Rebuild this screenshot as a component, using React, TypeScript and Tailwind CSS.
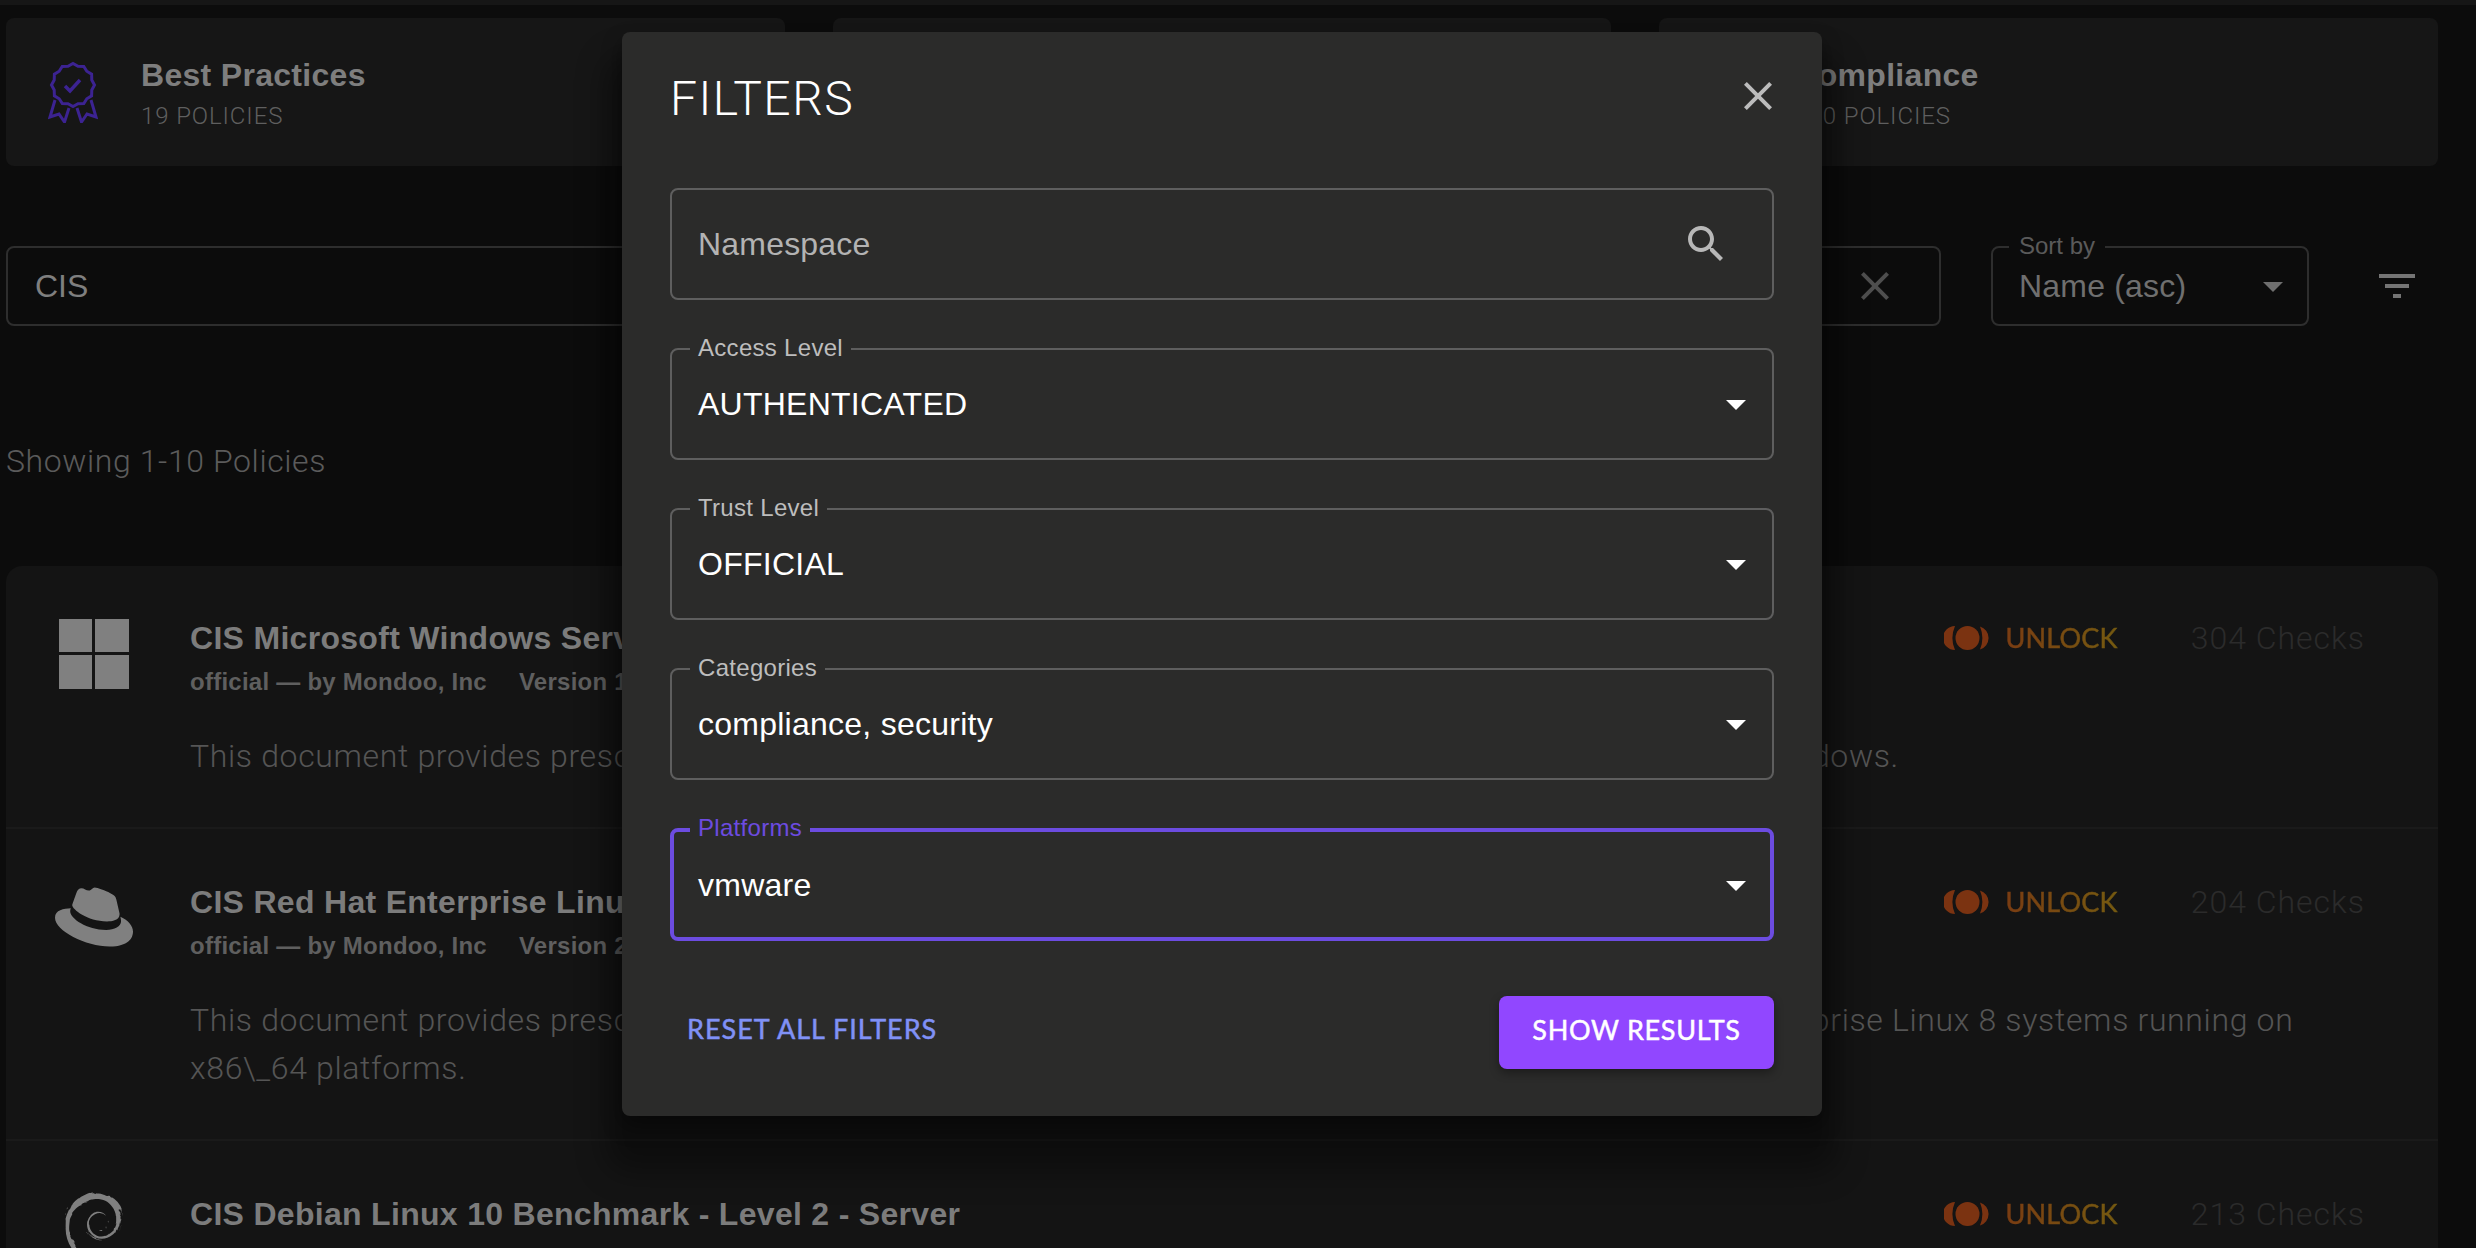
import { SiDebian, SiRedhat } from "react-icons/si";

const sans = "font-['Liberation_Sans',Arial,sans-serif]";
const light = "font-['Roboto','Liberation_Sans',sans-serif] font-light";
const geo = "font-['Lato','Liberation_Sans',sans-serif] font-normal [-webkit-text-stroke:0.5px_currentColor]";

function MuiIcon({ d, className }: { d: string; className: string }) {
  return (
    <svg viewBox="0 0 24 24" className={className} fill="currentColor">
      <path d={d} />
    </svg>
  );
}

const closePath =
  "M19 6.41 17.59 5 12 10.59 6.41 5 5 6.41 10.59 12 5 17.59 6.41 19 12 13.41 17.59 19 19 17.59 13.41 12z";
const searchPath =
  "M15.5 14h-.79l-.28-.27C15.41 12.59 16 11.11 16 9.5 16 5.91 13.09 3 9.5 3S3 5.91 3 9.5 5.91 16 9.5 16c1.61 0 3.09-.59 4.23-1.57l.27.28v.79l5 4.99L20.49 19l-4.99-5zm-6 0C7.01 14 5 11.99 5 9.5S7.01 5 9.5 5 14 7.01 14 9.5 11.99 14 9.5 14z";
const arrowPath = "M7 10l5 5 5-5z";
const filterPath = "M10 18h4v-2h-4v2zM3 6v2h18V6H3zm3 7h12v-2H6v2z";

function scallop(cx: number, cy: number, r: number) {
  const pts: string[] = [];
  for (let i = 0; i < 24; i++) {
    const a = (i / 24) * Math.PI * 2;
    const rr = i % 2 === 0 ? r : r - 2;
    pts.push(`${(cx + Math.cos(a) * rr).toFixed(1)},${(cy + Math.sin(a) * rr).toFixed(1)}`);
  }
  return pts.join(" ");
}

function RibbonIcon() {
  return (
    <svg viewBox="0 0 50 62" className="h-[62px] w-[50px] shrink-0" fill="none" stroke="#3c2392" strokeWidth="3">
      <polygon points={scallop(25, 24, 21.5)} />
      <path d="M7 39 2 56l9-3 5.5 8 4.5-14" />
      <path d="M43 39l5 17-9-3-5.5 8-4.5-14" />
      <path d="M17 25l5 5 10-11" strokeWidth="3.5" />
    </svg>
  );
}

function StatCard({ title, count, icon }: { title: string; count: string; icon?: boolean }) {
  return (
    <div className="flex h-[148px] items-center rounded-[8px] bg-[#161616] pl-[42px]">
      {icon ? <RibbonIcon /> : <div className="h-[62px] w-[50px] shrink-0" />}
      <div className="ml-[43px] pt-[6px]">
        <div className={`${sans} text-[32px] leading-[36px] font-bold tracking-[0.3px] text-[#7e7e7e]`}>{title}</div>
        <div className={`${light} mt-[5px] text-[24px] leading-[36px] tracking-[0.9px] text-[#5f5f5f]`}>{count}</div>
      </div>
    </div>
  );
}

function UnlockMark() {
  return (
    <svg viewBox="0 0 48 24" className="h-[24px] w-[48px]">
      <path d="M11 0A12 12 0 0 0 11 24 30 30 0 0 1 11 0z" fill="#7b3311" />
      <circle cx="23.5" cy="12" r="12" fill="#7b3311" />
      <path d="M36 .5A12 12 0 0 1 36 23.5 30 30 0 0 0 36 .5z" fill="#7b3311" />
    </svg>
  );
}

type Policy = {
  title: string;
  version?: string;
  checks: string;
  text: string;
  icon: React.ReactNode;
};

const policies: Policy[] = [
  {
    title: "CIS Microsoft Windows Server 2019 Benchmark",
    version: "Version 1.2.1",
    checks: "304 Checks",
    text: "This document provides prescriptive guidance for establishing a secure configuration profiles for Microsoft Windows.",
    icon: (
      <svg viewBox="0 0 70 70" className="mx-auto -mt-[1px] h-[70px] w-[70px]" fill="#808080">
        <rect x="0" y="0" width="33" height="33" />
        <rect x="36" y="0" width="34" height="33" />
        <rect x="0" y="36" width="33" height="34" />
        <rect x="36" y="36" width="34" height="34" />
      </svg>
    ),
  },
  {
    title: "CIS Red Hat Enterprise Linux 8 Benchmark",
    version: "Version 2.0.0",
    checks: "204 Checks",
    text: "This document provides prescriptive guidance for establishing a secure configuration posture for Red Hat Enterprise Linux 8 systems running on x86\\_64 platforms.",
    icon: <SiRedhat className="mx-auto -mt-[6px] h-[78px] w-[78px] text-[#808080]" />,
  },
  {
    title: "CIS Debian Linux 10 Benchmark - Level 2 - Server",
    checks: "213 Checks",
    text: "",
    icon: <SiDebian className="mx-auto -mt-[4px] h-[72px] w-[72px] text-[#808080]" />,
  },
];

function PolicyRow({ policy }: { policy: Policy }) {
  return (
    <div className="flex border-t-2 border-[#1a1a1a] pt-[55px] pr-[73px] pb-[47px] pl-[48px] first:border-t-0 first:pt-[54px]">
      <div className="w-[80px] shrink-0">{policy.icon}</div>
      <div className="ml-[56px] min-w-0 flex-1">
        <div className="flex h-[36px] items-center justify-between">
          <div className={`${sans} text-[32px] leading-[36px] font-bold tracking-[0.3px] text-[#7c7c7c]`}>{policy.title}</div>
          <div className="flex items-center">
            <UnlockMark />
            <span className={`${geo} ml-[13px] bg-linear-to-r from-[#7a3c12] to-[#755a10] bg-clip-text text-[27px] leading-[36px] tracking-[0.2px] text-transparent [-webkit-text-stroke:0.5px_transparent]`}>
              UNLOCK
            </span>
            <span className={`${light} ml-[73px] text-[32px] leading-[36px] tracking-[1px] text-[#2b2b2b]`}>{policy.checks}</span>
          </div>
        </div>
        {policy.version && (
          <div className={`${sans} mt-[8px] flex text-[24px] leading-[36px] font-bold tracking-[0.25px] text-[#5f5f5f]`}>
            <span>official — by Mondoo, Inc</span>
            <span className="ml-[32px]">{policy.version}</span>
          </div>
        )}
        {policy.text && (
          <p className={`${light} mt-[32px] max-w-[2200px] text-[32px] leading-[48px] tracking-[0.65px] text-[#555555]`}>{policy.text}</p>
        )}
      </div>
    </div>
  );
}

function Field({
  label,
  value,
  focused,
}: {
  label: string;
  value: string;
  focused?: boolean;
}) {
  return (
    <div
      className={
        focused
          ? "relative flex h-[113px] items-center justify-between rounded-[8px] border-[4px] border-[#6c4ce0] pr-[10px] pl-[24px]"
          : "relative flex h-[112px] items-center justify-between rounded-[8px] border-2 border-[#5e5e5e] pr-[12px] pl-[26px]"
      }
    >
      <span
        className={
          focused
            ? `${sans} absolute -top-[18px] left-[16px] bg-[#2b2b2a] px-[8px] text-[24px] leading-[28px] tracking-[0.3px] text-[#6d4be0]`
            : `${sans} absolute -top-[16px] left-[18px] bg-[#2b2b2a] px-[8px] text-[24px] leading-[28px] tracking-[0.3px] text-[#bdbdbd]`
        }
      >
        {label}
      </span>
      <span className={`${sans} text-[32px] leading-[40px] tracking-[0.25px] text-white`}>{value}</span>
      <MuiIcon d={arrowPath} className="h-[48px] w-[48px] text-white" />
    </div>
  );
}

export default function App() {
  return (
    <div className="relative h-[1248px] w-[2476px] overflow-hidden bg-[#0c0c0c]">
      <div className="h-[5px] bg-[#161616]" />

      <div className="pr-[38px] pl-[6px]">
        <div className="mt-[13px] grid grid-cols-3 gap-[48px]">
          <StatCard title="Best Practices" count="19 POLICIES" icon />
          <div className="h-[148px] rounded-[8px] bg-[#161616]" />
          <StatCard title="Compliance" count="100 POLICIES" />
        </div>

        <div className="mt-[80px] flex items-center">
          <div className="flex h-[80px] flex-1 items-center justify-between rounded-[8px] border-2 border-[#2e2e2e] pr-[40px] pl-[27px]">
            <span className={`${sans} text-[32px] text-[#7f7f7f]`}>CIS</span>
            <MuiIcon d={closePath} className="h-[48px] w-[48px] text-[#4e4e4e]" />
          </div>
          <div className="relative ml-[50px] flex h-[80px] w-[318px] items-center justify-between rounded-[8px] border-2 border-[#2e2e2e] pr-[10px] pl-[26px]">
            <span className={`${sans} absolute -top-[16px] left-[16px] bg-[#0c0c0c] px-[10px] text-[24px] leading-[28px] text-[#5a5a5a]`}>
              Sort by
            </span>
            <span className={`${sans} text-[32px] tracking-[0.2px] text-[#6f6f6f]`}>Name (asc)</span>
            <MuiIcon d={arrowPath} className="h-[48px] w-[48px] text-[#6f6f6f]" />
          </div>
          <MuiIcon d={filterPath} className="mr-[17px] ml-[64px] h-[48px] w-[48px] text-[#757575]" />
        </div>

        <div className={`${light} mt-[111px] text-[32px] leading-[48px] tracking-[0.6px] text-[#5b5b5b]`}>Showing 1-10 Policies</div>

        <div className="mt-[81px] rounded-[16px] bg-[#141414]">
          {policies.map((policy) => (
            <PolicyRow key={policy.title} policy={policy} />
          ))}
        </div>
      </div>

      {/* dialog over the page */}
      <div className="absolute inset-0 flex items-start pt-[32px] pl-[622px]">
        <div className="h-[1084px] w-[1200px] rounded-[8px] bg-[#2b2b2a] px-[48px] shadow-[0_10px_20px_rgba(0,0,0,0.4),0_40px_30px_16px_rgba(0,0,0,0.35)]">
          <div className="flex h-[156px] items-start justify-between pt-[33px]">
            <h2 className={`${light} text-[48px] leading-[68px] tracking-[1.5px] text-white`}>FILTERS</h2>
            <MuiIcon d={closePath} className="-mr-[8px] mt-[7px] h-[48px] w-[48px] text-[#bcbcbc]" />
          </div>

          <div className="flex flex-col gap-[48px]">
            <div className="flex h-[112px] items-center justify-between rounded-[8px] border-2 border-[#5e5e5e] pr-[42px] pl-[26px]">
              <span className={`${sans} text-[32px] tracking-[0.2px] text-[#b3b3b3]`}>Namespace</span>
              <MuiIcon d={searchPath} className="h-[48px] w-[48px] text-[#b8b8b8]" />
            </div>
            <Field label="Access Level" value="AUTHENTICATED" />
            <Field label="Trust Level" value="OFFICIAL" />
            <Field label="Categories" value="compliance, security" />
            <Field label="Platforms" value="vmware" focused />
          </div>

          <div className="mt-[55px] flex items-center justify-between">
            <span className={`${geo} ml-[17px] pb-[6px] text-[27px] tracking-[1px] text-[#8091f6]`}>RESET ALL FILTERS</span>
            <button
              type="button"
              className={`${geo} h-[73px] w-[275px] rounded-[8px] bg-[#9147ff] pb-[4px] text-[27px] tracking-[0.7px] text-white shadow-[0_4px_10px_rgba(0,0,0,0.35)]`}
            >
              SHOW RESULTS
            </button>
          </div>
        </div>
      </div>
    </div>
  );
}
